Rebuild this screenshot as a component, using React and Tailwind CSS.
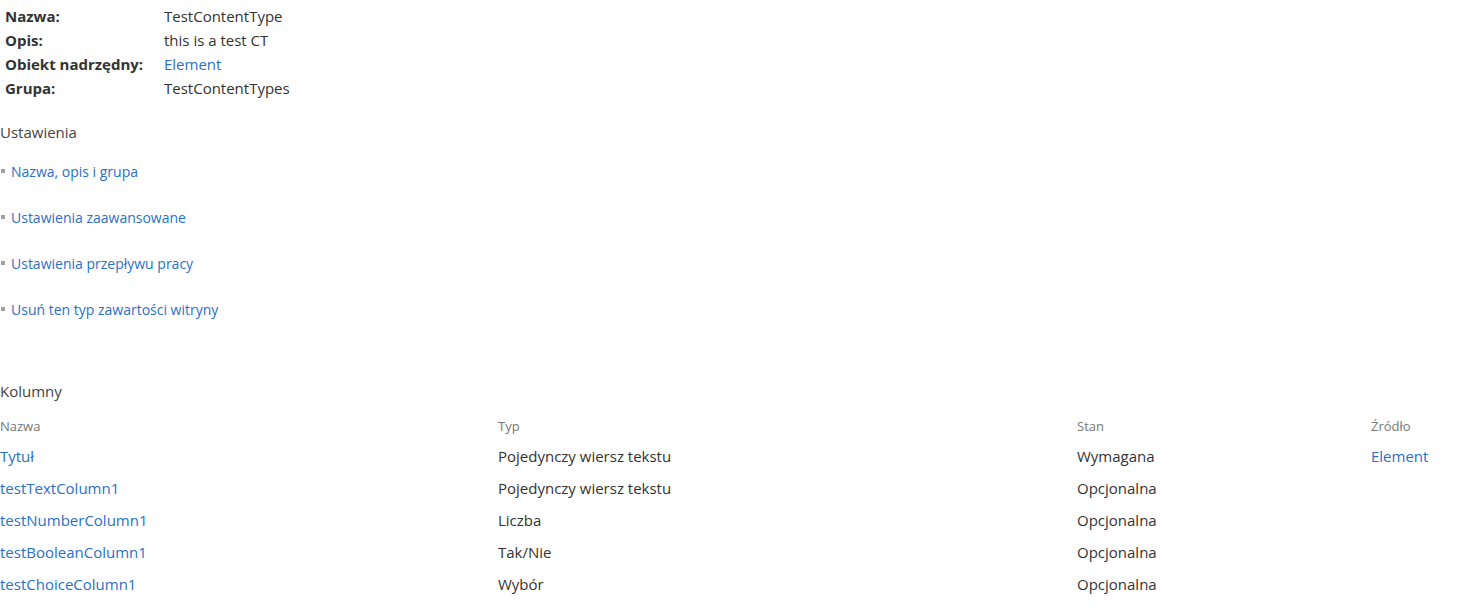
import React from "react";

const font = { fontFamily: '"Open Sans", "Noto Sans", sans-serif' };

const details = [
  { label: "Nazwa:", value: "TestContentType" },
  { label: "Opis:", value: "this is a test CT" },
  { label: "Obiekt nadrzędny:", value: "Element", link: true },
  { label: "Grupa:", value: "TestContentTypes" },
];

const settings = [
  "Nazwa, opis i grupa",
  "Ustawienia zaawansowane",
  "Ustawienia przepływu pracy",
  "Usuń ten typ zawartości witryny",
];

const columns = [
  { name: "Tytuł", type: "Pojedynczy wiersz tekstu", status: "Wymagana", source: "Element" },
  { name: "testTextColumn1", type: "Pojedynczy wiersz tekstu", status: "Opcjonalna" },
  { name: "testNumberColumn1", type: "Liczba", status: "Opcjonalna" },
  { name: "testBooleanColumn1", type: "Tak/Nie", status: "Opcjonalna" },
  { name: "testChoiceColumn1", type: "Wybór", status: "Opcjonalna" },
];

export default function App() {
  return (
    <div className="min-h-screen bg-white text-[#333333]" style={font}>
      <div className="pt-[4px] pl-[5px]">
        {details.map((d) => (
          <div key={d.label} className="flex h-6 items-center text-[15px]">
            <div className="w-[159px] font-bold text-[#333333]">{d.label}</div>
            <div className={d.link ? "text-[#2a6fc9]" : "text-[#333333]"}>{d.value}</div>
          </div>
        ))}
      </div>

      <div className="mt-[20px] text-[15px] leading-6 text-[#444444]">Ustawienia</div>
      <ul className="mt-[4px]">
        {settings.map((s) => (
          <li key={s} className="flex h-[46px] items-center text-[14px] text-[#2a6fc9]">
            <span className="ml-[1px] mr-[6px] inline-block h-[4px] w-[4px] bg-[#a0a0a0]" />
            {s}
          </li>
        ))}
      </ul>

      <div className="mt-[47px] text-[15px] leading-6 text-[#444444]">Kolumny</div>
      <table className="mt-[10px] w-full border-collapse text-left">
        <thead>
          <tr className="h-[27px] text-[13px] text-[#777777]">
            <th className="w-[498px] p-0 font-normal">Nazwa</th>
            <th className="w-[579px] p-0 font-normal">Typ</th>
            <th className="w-[294px] p-0 font-normal">Stan</th>
            <th className="p-0 font-normal">Źródło</th>
          </tr>
        </thead>
        <tbody>
          {columns.map((c) => (
            <tr key={c.name} className="h-8 text-[15px]">
              <td className="p-0 text-[#2a6fc9]">{c.name}</td>
              <td className="p-0 text-[#333333]">{c.type}</td>
              <td className="p-0 text-[#333333]">{c.status}</td>
              <td className="p-0 text-[#2a6fc9]">{c.source || ""}</td>
            </tr>
          ))}
        </tbody>
      </table>
    </div>
  );
}
